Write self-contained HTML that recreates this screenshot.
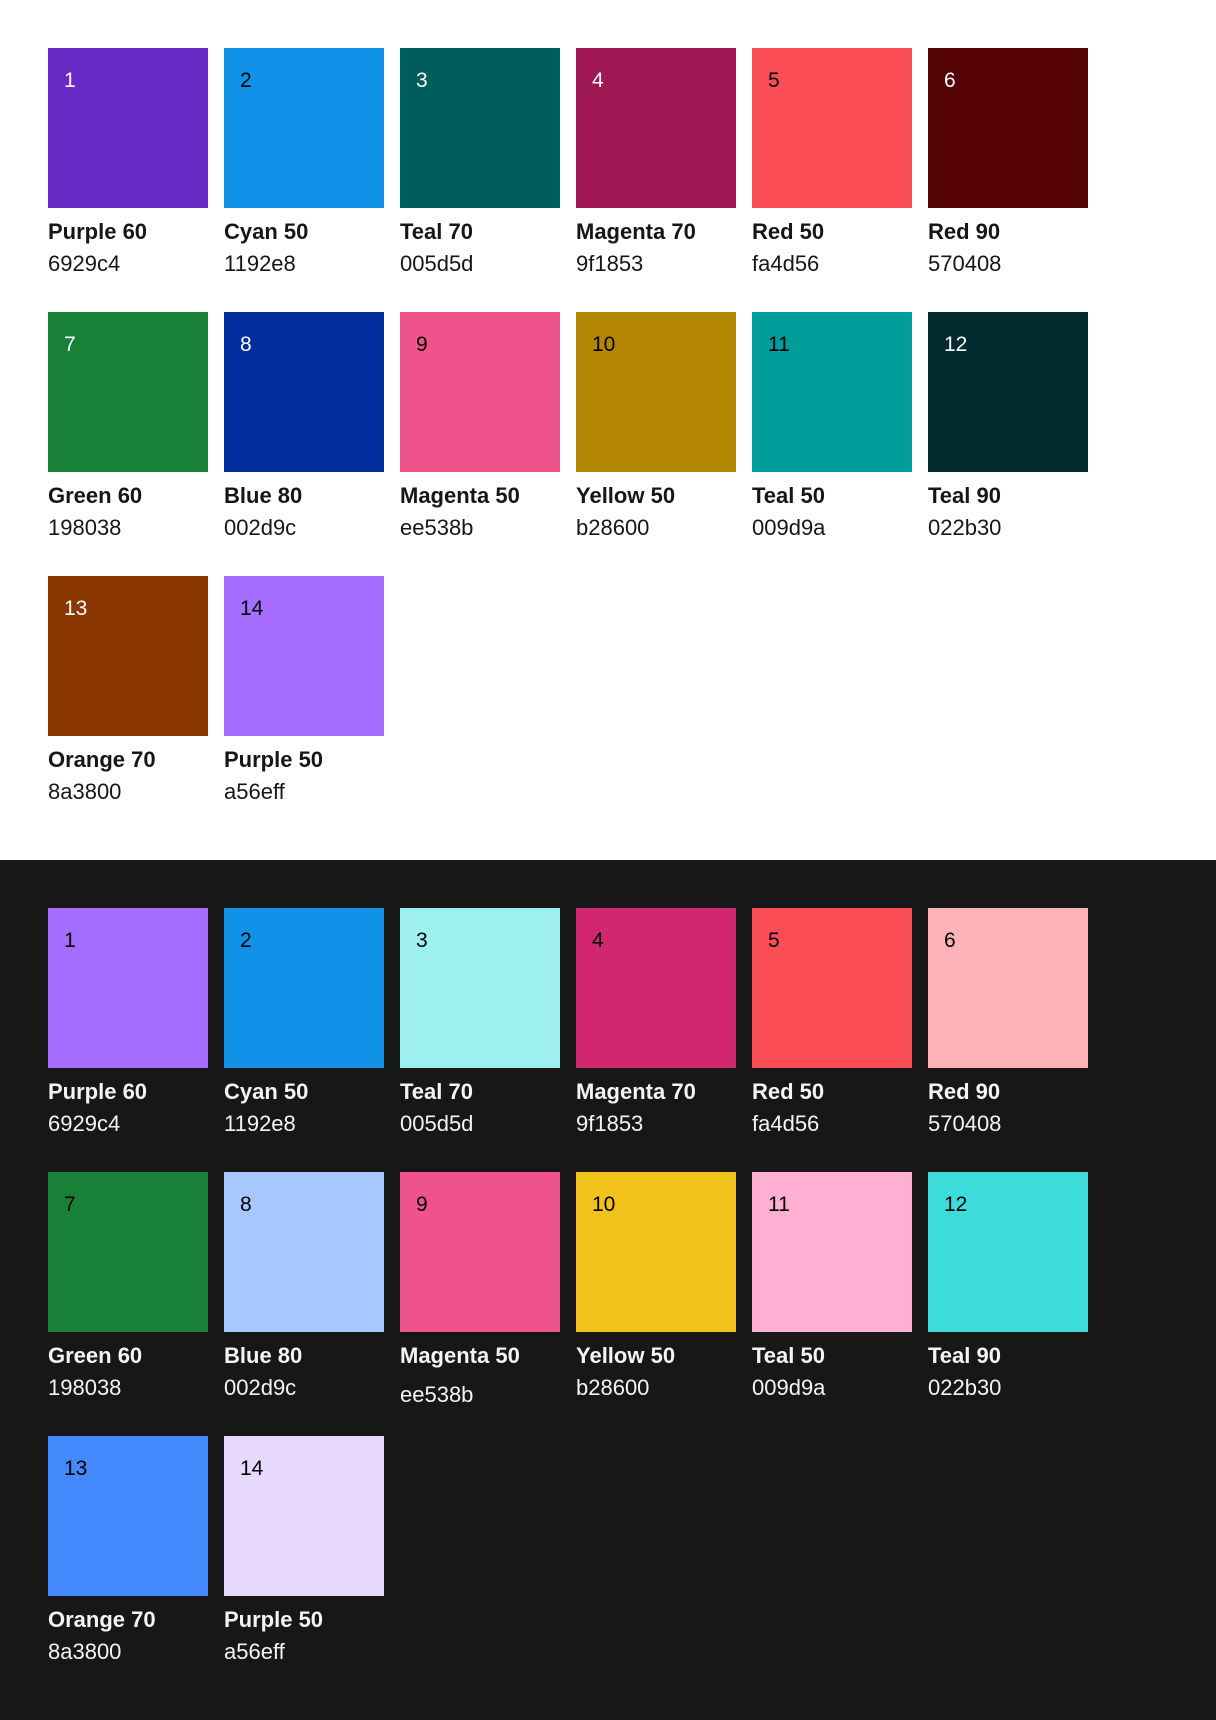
<!DOCTYPE html>
<html><head><meta charset="utf-8"><style>
*{margin:0;padding:0;box-sizing:border-box}
body{width:1216px;height:1720px;background:#fff;font-family:"Liberation Sans",sans-serif;position:relative;overflow:hidden}
.dark{position:absolute;left:0;top:860px;width:1216px;height:860px;background:#171717}
.c{position:absolute;width:170px}
.s{width:160px;height:160px;padding:19px 16px;font-size:21px;line-height:28px;color:#000}
.w{color:#fff}
.n{margin-top:10px;font-size:22px;font-weight:bold;line-height:28px;color:#161616}
.h{margin-top:4px;font-size:22px;line-height:28px;color:#161616}
.dark .n,.dark .h{color:#f4f4f4}
</style></head><body>
<div class="c" style="left:48px;top:48px"><div class="s w" style="background:#6929c4">1</div><div class="n">Purple 60</div><div class="h">6929c4</div></div>
<div class="c" style="left:224px;top:48px"><div class="s" style="background:#1192e8">2</div><div class="n">Cyan 50</div><div class="h">1192e8</div></div>
<div class="c" style="left:400px;top:48px"><div class="s w" style="background:#005d5d">3</div><div class="n">Teal 70</div><div class="h">005d5d</div></div>
<div class="c" style="left:576px;top:48px"><div class="s w" style="background:#9f1853">4</div><div class="n">Magenta 70</div><div class="h">9f1853</div></div>
<div class="c" style="left:752px;top:48px"><div class="s" style="background:#fa4d56">5</div><div class="n">Red 50</div><div class="h">fa4d56</div></div>
<div class="c" style="left:928px;top:48px"><div class="s w" style="background:#570408">6</div><div class="n">Red 90</div><div class="h">570408</div></div>
<div class="c" style="left:48px;top:312px"><div class="s w" style="background:#198038">7</div><div class="n">Green 60</div><div class="h">198038</div></div>
<div class="c" style="left:224px;top:312px"><div class="s w" style="background:#002d9c">8</div><div class="n">Blue 80</div><div class="h">002d9c</div></div>
<div class="c" style="left:400px;top:312px"><div class="s" style="background:#ee538b">9</div><div class="n">Magenta 50</div><div class="h">ee538b</div></div>
<div class="c" style="left:576px;top:312px"><div class="s" style="background:#b28600">10</div><div class="n">Yellow 50</div><div class="h">b28600</div></div>
<div class="c" style="left:752px;top:312px"><div class="s" style="background:#009d9a">11</div><div class="n">Teal 50</div><div class="h">009d9a</div></div>
<div class="c" style="left:928px;top:312px"><div class="s w" style="background:#022b30">12</div><div class="n">Teal 90</div><div class="h">022b30</div></div>
<div class="c" style="left:48px;top:576px"><div class="s w" style="background:#8a3800">13</div><div class="n">Orange 70</div><div class="h">8a3800</div></div>
<div class="c" style="left:224px;top:576px"><div class="s" style="background:#a56eff">14</div><div class="n">Purple 50</div><div class="h">a56eff</div></div>
<div class="dark">
<div class="c" style="left:48px;top:48px"><div class="s" style="background:#a56eff">1</div><div class="n">Purple 60</div><div class="h">6929c4</div></div>
<div class="c" style="left:224px;top:48px"><div class="s" style="background:#1192e8">2</div><div class="n">Cyan 50</div><div class="h">1192e8</div></div>
<div class="c" style="left:400px;top:48px"><div class="s" style="background:#9ef0f0">3</div><div class="n">Teal 70</div><div class="h">005d5d</div></div>
<div class="c" style="left:576px;top:48px"><div class="s" style="background:#d12771">4</div><div class="n">Magenta 70</div><div class="h">9f1853</div></div>
<div class="c" style="left:752px;top:48px"><div class="s" style="background:#fa4d56">5</div><div class="n">Red 50</div><div class="h">fa4d56</div></div>
<div class="c" style="left:928px;top:48px"><div class="s" style="background:#ffb3b8">6</div><div class="n">Red 90</div><div class="h">570408</div></div>
<div class="c" style="left:48px;top:312px"><div class="s" style="background:#198038">7</div><div class="n">Green 60</div><div class="h">198038</div></div>
<div class="c" style="left:224px;top:312px"><div class="s" style="background:#a6c8ff">8</div><div class="n">Blue 80</div><div class="h">002d9c</div></div>
<div class="c" style="left:400px;top:312px"><div class="s" style="background:#ee538b">9</div><div class="n">Magenta 50</div><div class="h" style="margin-top:11px">ee538b</div></div>
<div class="c" style="left:576px;top:312px"><div class="s" style="background:#f1c21b">10</div><div class="n">Yellow 50</div><div class="h">b28600</div></div>
<div class="c" style="left:752px;top:312px"><div class="s" style="background:#ffafd2">11</div><div class="n">Teal 50</div><div class="h">009d9a</div></div>
<div class="c" style="left:928px;top:312px"><div class="s" style="background:#3ddbd9">12</div><div class="n">Teal 90</div><div class="h">022b30</div></div>
<div class="c" style="left:48px;top:576px"><div class="s" style="background:#4589ff">13</div><div class="n">Orange 70</div><div class="h">8a3800</div></div>
<div class="c" style="left:224px;top:576px"><div class="s" style="background:#e8daff">14</div><div class="n">Purple 50</div><div class="h">a56eff</div></div>
</div>
</body></html>
